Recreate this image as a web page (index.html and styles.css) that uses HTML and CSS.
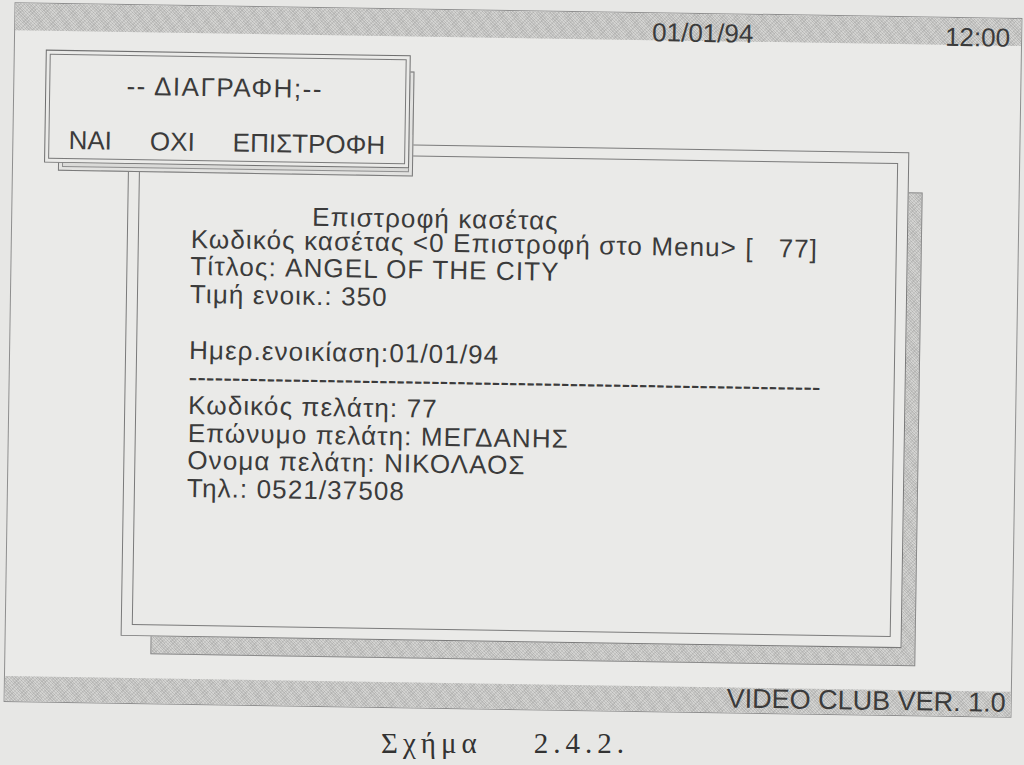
FILE: index.html
```html
<!DOCTYPE html>
<html lang="el">
<head>
<meta charset="utf-8">
<title>VIDEO CLUB</title>
<link rel="stylesheet" href="styles.css">
</head>
<body>
<div class="page">
  <div class="screen">
    <div class="topbar stipple">
      <span class="date">01/01/94</span>
      <span class="time">12:00</span>
    </div>
    <div class="desktop">
      <div class="win">
        <div class="win-shadow stipple"></div>
        <div class="win-inner">
          <div class="line title">Επιστροφή κασέτας</div>
          <div class="line">Κωδικός κασέτας &lt;0 Επιστροφή στο Menu&gt; [   77]</div>
          <div class="line">Τίτλος: ANGEL OF THE CITY</div>
          <div class="line">Τιμή ενοικ.: 350</div>
          <div class="line"> </div>
          <div class="line">Ημερ.ενοικίαση:01/01/94</div>
          <div class="line dashes">-------------------------------------------------------------------------</div>
          <div class="line">Κωδικός πελάτη: 77</div>
          <div class="line">Επώνυμο πελάτη: ΜΕΓΔΑΝΗΣ</div>
          <div class="line">Ονομα πελάτη: ΝΙΚΟΛΑΟΣ</div>
          <div class="line">Τηλ.: 0521/37508</div>
        </div>
      </div>
      <div class="dialog">
        <div class="dialog-shadow"></div>
        <div class="dialog-box">
          <div class="dialog-frame">
            <div class="dialog-title">-- ΔΙΑΓΡΑΦΗ;--</div>
            <div class="dialog-options">
              <span>ΝΑΙ</span>
              <span>ΟΧΙ</span>
              <span>ΕΠΙΣΤΡΟΦΗ</span>
            </div>
          </div>
        </div>
      </div>
    </div>
    <div class="bottombar stipple">
      <span class="version">VIDEO CLUB VER. 1.0</span>
    </div>
  </div>
  <div class="caption">
    <span>Σχήμα</span>
    <span>2.4.2.</span>
  </div>
</div>
</body>
</html>
```

FILE: styles.css
```css
html, body {
  margin: 0;
  padding: 0;
}

body {
  background: #e7e7e5;
  font-family: "Liberation Sans", Arial, sans-serif;
  color: #3b3b3b;
}

.page {
  width: 1024px;
  height: 765px;
  overflow: hidden;
}

.stipple {
  background-color: #d3d3d1;
  background-image:
    repeating-linear-gradient(45deg, rgba(90, 90, 90, 0.16) 0 1px, transparent 1px 2px),
    repeating-linear-gradient(-45deg, rgba(90, 90, 90, 0.12) 0 1px, transparent 1px 3px);
}

.screen {
  box-sizing: border-box;
  width: 1008px;
  height: 700px;
  margin: 10px 0 0 9px;
  border: 1px solid #8e8e8e;
  background: #eaeae8;
  display: flex;
  flex-direction: column;
  transform: rotate(0.9deg);
  transform-origin: 50% 50%;
}

.topbar {
  box-sizing: border-box;
  flex: none;
  height: 27px;
  display: flex;
  align-items: flex-start;
  padding: 6px 11px 0 637px;
  font-size: 26px;
  line-height: 26px;
}

.topbar .time {
  margin-left: auto;
}

.desktop {
  flex: 1;
  position: relative;
}

.win {
  position: relative;
  box-sizing: border-box;
  width: 781px;
  height: 496px;
  margin: 108px 0 0 115px;
  border: 1px solid #7a7a7a;
  padding: 10px;
  background: #eaeae8;
}

.win-shadow {
  position: absolute;
  left: 29px;
  top: 39px;
  width: 765px;
  height: 474px;
  box-sizing: border-box;
  border: 1px solid #8a8a8a;
  z-index: -1;
}

.win-inner {
  box-sizing: border-box;
  height: 100%;
  border: 1px solid #7a7a7a;
  padding: 49px 0 0 52px;
  font-size: 26px;
  line-height: 27.7px;
  letter-spacing: 1.1px;
}

.line {
  white-space: pre;
}

.line.title {
  padding-left: 121px;
  margin-bottom: -4px;
}

.line.dashes {
  letter-spacing: 0;
}

.dialog {
  position: absolute;
  left: 31px;
  top: 19px;
  width: 365px;
  height: 113px;
  z-index: 2;
}

.dialog-shadow {
  position: absolute;
  left: 14px;
  top: 16px;
  width: 355px;
  height: 105px;
  box-sizing: border-box;
  border: 1px solid #7a7a7a;
  background: #dadad8;
  box-shadow: inset 0 0 0 3px #e2e2e0, inset 0 0 0 4px #8e8e8e;
  z-index: -1;
}

.dialog-box {
  box-sizing: border-box;
  height: 100%;
  border: 1px solid #6f6f6f;
  padding: 3px;
  background: #eaeae8;
}

.dialog-frame {
  box-sizing: border-box;
  height: 100%;
  border: 1px solid #7a7a7a;
  padding-top: 15px;
  font-size: 26px;
  line-height: 30px;
}

.dialog-title {
  text-align: center;
  letter-spacing: 1.5px;
  padding-right: 6px;
}

.dialog-options {
  margin-top: 25px;
  display: flex;
  justify-content: center;
  gap: 38px;
}

.bottombar {
  box-sizing: border-box;
  flex: none;
  height: 25px;
  display: flex;
  justify-content: flex-end;
  padding-right: 5px;
  font-size: 27px;
  line-height: 22px;
}

.caption {
  display: flex;
  justify-content: center;
  gap: 52px;
  margin-top: 17px;
  padding-right: 14px;
  font-family: "Liberation Serif", "Times New Roman", serif;
  font-size: 29px;
  line-height: 32px;
  letter-spacing: 5px;
  color: #333;
}
```
